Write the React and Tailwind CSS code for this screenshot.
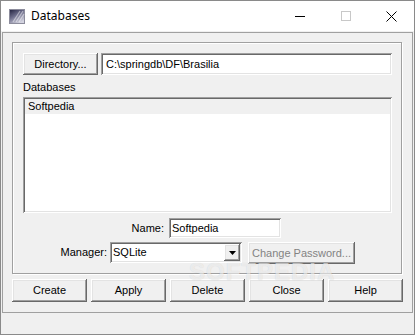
import React from 'react';

const font = { fontFamily: '"Liberation Sans", Arial, sans-serif' };

const raised =
  'bg-[#f0f0f0] shadow-[inset_-1px_-1px_0_#696969,inset_1px_1px_0_#ffffff,inset_-2px_-2px_0_#a0a0a0,inset_2px_2px_0_#e3e3e3]';
const sunken =
  'bg-white shadow-[inset_1px_1px_0_#a0a0a0,inset_-1px_-1px_0_#ffffff,inset_2px_2px_0_#696969,inset_-2px_-2px_0_#e3e3e3]';

const Button = ({ children, className = '', disabled }) => (
  <div
    className={`${raised} flex items-center justify-center text-[11px] leading-[13px] ${
      disabled ? 'text-[#838383]' : 'text-black'
    } ${className}`}
  >
    {children}
  </div>
);

const AppIcon = () => (
  <svg width="16" height="15" viewBox="0 0 16 15">
    <defs>
      <linearGradient id="ig" x1="0" y1="0" x2="0.6" y2="1">
        <stop offset="0" stopColor="#1e1e3c" />
        <stop offset="0.5" stopColor="#6e6e8c" />
        <stop offset="1" stopColor="#d4d4e0" />
      </linearGradient>
    </defs>
    <rect x="0.5" y="0.5" width="15" height="14" fill="url(#ig)" stroke="#8c8c9c" />
    <path d="M4 13 L11 2 M7 13 L14 2 M10 13 L15 5" stroke="#ffffff" strokeOpacity="0.45" strokeWidth="1.2" />
  </svg>
);

export default function App() {
  return (
    <div className="relative w-[415px] h-[335px] border border-[#8a8a8a] bg-white flex flex-col" style={font}>
      {/* title bar */}
      <div className="h-[30px] flex items-center bg-white">
        <div className="ml-[8px] mt-[1px]">
          <AppIcon />
        </div>
        <span className="ml-[6px] text-[12px] text-black" style={{ fontFamily: '"Noto Sans", "Liberation Sans", sans-serif' }}>
          Databases
        </span>
        <div className="ml-auto flex h-full">
          <div className="w-[46px] flex items-center justify-center">
            <div className="w-[10px] h-px bg-black" />
          </div>
          <div className="w-[46px] flex items-center justify-center">
            <div className="w-[10px] h-[10px] border border-[#c8c8c8]" />
          </div>
          <div className="w-[45px] flex items-center justify-center">
            <svg width="11" height="11" viewBox="0 0 11 11">
              <path d="M0.5 0.5 L10.5 10.5 M10.5 0.5 L0.5 10.5" stroke="#000" strokeWidth="1" />
            </svg>
          </div>
        </div>
      </div>

      {/* client */}
      <div className="flex-1 bg-[#f0f0f0] px-[1px] flex flex-col">
        <div className="mt-[1px] h-[281px] border border-[#a0a0a0] pl-[9px] pt-[9px] flex flex-col">
          <div className="w-[390px] h-[232px] border border-[#a0a0a0] shadow-[inset_1px_1px_0_#ffffff,1px_1px_0_#ffffff] pl-[10px] pr-[9px] pt-[10px] flex flex-col">
            <div className="flex h-[22px] gap-[3px]">
              <Button className="w-[75px]">Directory...</Button>
              <div className={`${sunken} flex-1 flex items-center pl-[5px] text-[11px] text-black`}>
                C:\springdb\DF\Brasilia
              </div>
            </div>
            <div className="mt-[6px] h-[13px] text-[11px] leading-[13px] text-black">Databases</div>
            <div className={`${sunken} mt-[3px] h-[116px] p-[2px]`}>
              <div className="h-[15px] bg-[#f0f0f0] pl-[3px] text-[11px] leading-[15px] text-black">Softpedia</div>
            </div>
            <div className="mt-[5px] flex items-center h-[20px] gap-[5px]">
              <div className="w-[141px] text-right text-[11px] text-black">Name:</div>
              <div className={`${sunken} w-[112px] h-[20px] flex items-center pl-[3px] text-[11px] text-black`}>
                Softpedia
              </div>
            </div>
            <div className="mt-[4px] flex items-start h-[22px]">
              <div className="w-[84px] h-[21px] flex items-center justify-end text-[11px] text-black">Manager:</div>
              <div className={`${sunken} ml-[3px] w-[132px] h-[21px] flex items-center pl-[3px] pr-[2px] text-[11px] text-black`}>
                <span className="flex-1">SQLite</span>
                <div className={`${raised} w-[16px] h-[17px] flex items-center justify-center`}>
                  <svg width="7" height="4" viewBox="0 0 7 4">
                    <path d="M0 0 H7 L3.5 4 Z" fill="#000" />
                  </svg>
                </div>
              </div>
              <Button disabled className="ml-[6px] w-[107px] h-[22px]">Change Password...</Button>
            </div>
          </div>
          <div className="mt-[5px] flex gap-[4px]">
            <Button className="w-[75px] h-[23px]">Create</Button>
            <Button className="w-[75px] h-[23px]">Apply</Button>
            <Button className="w-[75px] h-[23px]">Delete</Button>
            <Button className="w-[75px] h-[23px]">Close</Button>
            <Button className="w-[75px] h-[23px]">Help</Button>
          </div>
        </div>
      </div>

      {/* watermark */}
      <div className="pointer-events-none absolute left-[188px] top-[253px] text-[24px] font-bold tracking-[1px] text-white/60 [text-shadow:0_0_1px_rgba(0,0,0,0.15)]">
        SOFTPEDIA
      </div>
    </div>
  );
}
